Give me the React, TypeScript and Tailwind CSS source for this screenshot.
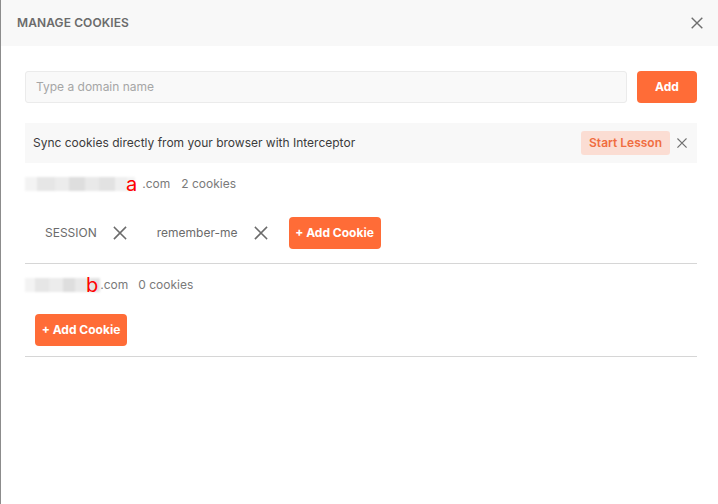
import React from "react"

function XIcon({ className }: { className?: string }) {
    return (
        <svg viewBox="0 0 16 16" className={className} fill="none" stroke="currentColor" strokeWidth={1.6} strokeLinecap="square">
            <path d="M2.5 2.5 L13.5 13.5 M13.5 2.5 L2.5 13.5" />
        </svg>
    )
}

function Blur({ widths }: { widths: number[] }) {
    const shades = ["#f3f3f3", "#e6e6e6", "#ececec", "#dedede", "#e9e9e9", "#e2e2e2", "#efefef"]
    return (
        <span className="inline-flex h-[14px] items-stretch blur-[1px]">
            {widths.map((w, i) => (
                <span key={i} style={{ width: w, background: shades[i % shades.length] }} />
            ))}
        </span>
    )
}

function CookieButton() {
    return (
        <button className="h-8 w-[92px] rounded bg-[#ff6c37] text-[12px] font-bold text-white">
            + Add Cookie
        </button>
    )
}

function Chip({ name }: { name: string }) {
    return (
        <div className="flex items-center gap-[15px]">
            <span className="text-[12px] text-[#6b6b6b]">{name}</span>
            <XIcon className="h-[16px] w-[16px] text-[#6b6b6b]" />
        </div>
    )
}

export default function App() {
    return (
        <div className="h-[504px] w-[718px] border-l border-[#8c8c8c] bg-white font-['Inter',sans-serif]">
            <div className="flex h-[46px] items-center justify-between bg-[#f8f8f8] pl-4 pr-[14px]">
                <h1 className="text-[12px] font-semibold tracking-[0.1px] text-[#6b6b6b]">MANAGE COOKIES</h1>
                <XIcon className="h-[14px] w-[14px] text-[#6e6e6e]" />
            </div>

            <div className="pl-6 pr-[21px] pt-[25px]">
                <div className="flex gap-[10px]">
                    <div className="flex h-8 flex-1 items-center rounded-[3px] border border-[#ebebeb] bg-[#f9f9f9] px-[10px] text-[12px] text-[#a6a6a6]">
                        Type a domain name
                    </div>
                    <button className="h-8 w-[60px] rounded bg-[#ff6c37] text-[12px] font-bold text-white">Add</button>
                </div>

                <div className="mt-5 flex h-10 items-center justify-between bg-[#f8f8f8] pl-2 pr-[9px]">
                    <span className="text-[12px] text-[#3b3b3b]">Sync cookies directly from your browser with Interceptor</span>
                    <div className="flex items-center gap-[6px]">
                        <span className="flex h-6 items-center rounded-[3px] bg-[#fbddd3] px-2 text-[12px] font-semibold text-[#f06d40]">
                            Start Lesson
                        </span>
                        <XIcon className="h-[12px] w-[12px] text-[#707070]" />
                    </div>
                </div>

                <div className="flex h-10 items-center pt-[2px] text-[12px] text-[#7a7a7a]">
                    <Blur widths={[12, 18, 14, 16, 14, 16, 12, 8]} />
                    <span className="relative -ml-[9px] mr-[5px] text-[20px] leading-none text-[#ff0000]">a</span>
                    <span>.com</span>
                    <span className="ml-[11px]">2 cookies</span>
                </div>

                <div className="flex h-[61px] items-center border-b border-[#d6d6d6] pl-5">
                    <Chip name="SESSION" />
                    <div className="ml-[29px]">
                        <Chip name="remember-me" />
                    </div>
                    <div className="ml-[20px]">
                        <CookieButton />
                    </div>
                </div>

                <div className="flex h-10 items-center pt-[1px] text-[12px] text-[#7a7a7a]">
                    <Blur widths={[10, 14, 14, 12, 16, 9]} />
                    <span className="relative -ml-[14px] mr-[2px] text-[20px] leading-none text-[#ff0000]">b</span>
                    <span>.com</span>
                    <span className="ml-[10px]">0 cookies</span>
                </div>

                <div className="border-b border-[#d6d6d6] pb-[10px] pl-[10px] pt-[10px]">
                    <CookieButton />
                </div>
            </div>
        </div>
    )
}
